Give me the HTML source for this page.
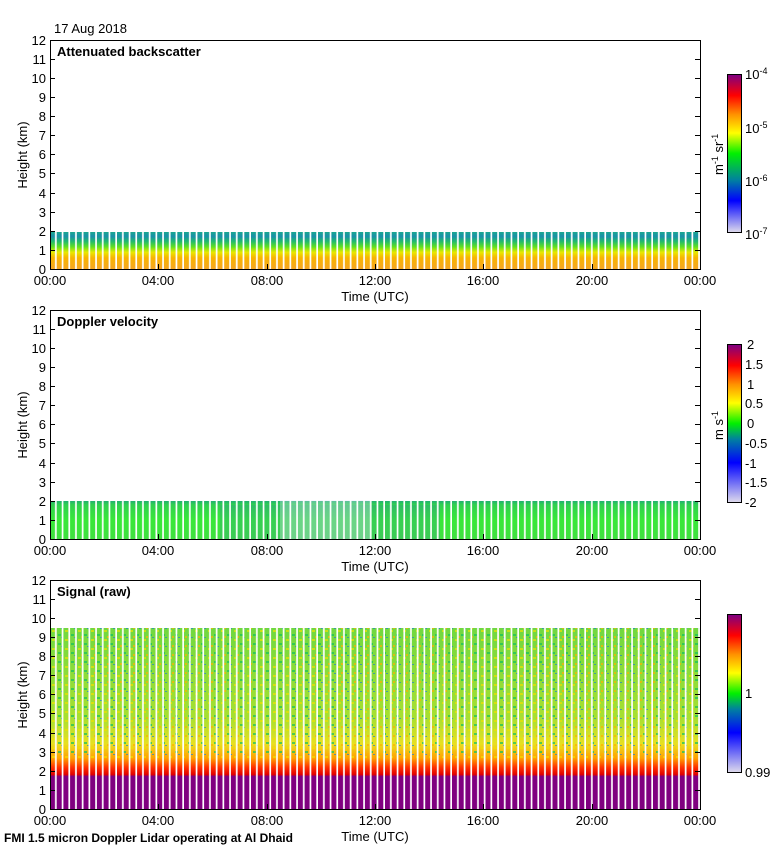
<!DOCTYPE html>
<html><head><meta charset="utf-8"><style>
body{margin:0;background:#fff;width:780px;height:850px;overflow:hidden}
svg text{font-family:"Liberation Sans",sans-serif;font-size:13px;fill:#000}
</style></head><body>
<svg width="780" height="850" xmlns="http://www.w3.org/2000/svg">
<defs>
<pattern id="gap" x="50" y="0" width="6.7" height="10" patternUnits="userSpaceOnUse"><rect x="5" y="0" width="1.7" height="10" fill="#fff"/></pattern>
<pattern id="noise" x="0" y="0" width="13" height="9" patternUnits="userSpaceOnUse"><rect x="0" y="0" width="3" height="2" fill="#f0e000"/><rect x="6" y="4" width="3" height="2" fill="#10c060"/><rect x="9" y="7" width="2" height="1" fill="#2080d0"/><rect x="3" y="6" width="2" height="2" fill="#ffb000"/></pattern>
<linearGradient id="g1" x1="0" y1="1" x2="0" y2="0">
<stop offset="0" stop-color="#f5a623"/><stop offset="0.3" stop-color="#f8b400"/><stop offset="0.45" stop-color="#e8e800"/><stop offset="0.6" stop-color="#60e020"/><stop offset="0.75" stop-color="#20b870"/><stop offset="0.88" stop-color="#1a90a8"/><stop offset="1" stop-color="#18a890"/></linearGradient>
<linearGradient id="g2" x1="0" y1="1" x2="0" y2="0">
<stop offset="0" stop-color="#40e040"/><stop offset="0.5" stop-color="#38e838"/><stop offset="0.9" stop-color="#30d050"/><stop offset="1" stop-color="#20b070"/></linearGradient>
<linearGradient id="g3" x1="0" y1="1" x2="0" y2="0">
<stop offset="0" stop-color="#800080"/><stop offset="0.18" stop-color="#800080"/><stop offset="0.19" stop-color="#e00000"/><stop offset="0.23" stop-color="#ff3000"/><stop offset="0.28" stop-color="#ffa000"/><stop offset="0.36" stop-color="#e8e020"/><stop offset="0.5" stop-color="#a8e030"/><stop offset="1" stop-color="#70d840"/></linearGradient>
<linearGradient id="cb1" x1="0" y1="1" x2="0" y2="0">
<stop offset="0" stop-color="#dcd8ec"/><stop offset="0.2" stop-color="#0000ff"/><stop offset="0.33" stop-color="#0080a0"/><stop offset="0.5" stop-color="#00f000"/><stop offset="0.63" stop-color="#ffff00"/><stop offset="0.75" stop-color="#ff9000"/><stop offset="0.87" stop-color="#ff0000"/><stop offset="1" stop-color="#800080"/></linearGradient>
<linearGradient id="cb3" x1="0" y1="1" x2="0" y2="0">
<stop offset="0" stop-color="#dcd8ec"/><stop offset="0.25" stop-color="#0000ff"/><stop offset="0.4" stop-color="#0080a0"/><stop offset="0.5" stop-color="#00f000"/><stop offset="0.63" stop-color="#ffff00"/><stop offset="0.75" stop-color="#ff9000"/><stop offset="0.87" stop-color="#ff0000"/><stop offset="1" stop-color="#800080"/></linearGradient>
</defs>
<text x="54" y="33">17 Aug 2018</text>

<!-- panel 1 -->
<rect x="50" y="232" width="650" height="37" fill="url(#g1)"/>
<rect x="50" y="228" width="650" height="42" fill="url(#gap)"/>
<!-- panel 2 -->
<rect x="50" y="501" width="650" height="38" fill="url(#g2)"/>
<rect x="220" y="505" width="220" height="34" fill="#3050e0" opacity="0.15"/>
<rect x="280" y="500" width="90" height="39" fill="#e0e0ff" opacity="0.3"/>
<rect x="50" y="498" width="650" height="42" fill="url(#gap)"/>
<!-- panel 3 -->
<rect x="50" y="628" width="650" height="181" fill="url(#g3)"/>
<rect x="50" y="628" width="650" height="130" fill="url(#noise)" opacity="0.7"/>
<rect x="50" y="625" width="650" height="185" fill="url(#gap)"/>

<g fill="none" stroke="#000">
<rect x="50.5" y="40.5" width="650" height="229"/>
<rect x="50.5" y="310.5" width="650" height="229"/>
<rect x="50.5" y="580.5" width="650" height="229"/>
<rect x="727.5" y="74.5" width="14" height="158"/>
<rect x="727.5" y="344.5" width="14" height="158"/>
<rect x="727.5" y="614.5" width="14" height="158"/>
</g>
<rect x="728" y="75" width="13" height="157" fill="url(#cb1)"/>
<rect x="728" y="345" width="13" height="157" fill="url(#cb3)"/>
<rect x="728" y="615" width="13" height="157" fill="url(#cb3)"/>

<g id="yl1" text-anchor="end">
<text x="46" y="45">12</text><text x="46" y="64">11</text><text x="46" y="83">10</text><text x="46" y="102">9</text><text x="46" y="121">8</text><text x="46" y="140">7</text><text x="46" y="159">6</text><text x="46" y="178">5</text><text x="46" y="198">4</text><text x="46" y="217">3</text><text x="46" y="236">2</text><text x="46" y="255">1</text><text x="46" y="274">0</text>
</g>
<use href="#yl1" y="270"/><use href="#yl1" y="540"/>
<g id="xl1" text-anchor="middle">
<text x="50" y="285">00:00</text><text x="158" y="285">04:00</text><text x="267" y="285">08:00</text><text x="375" y="285">12:00</text><text x="483" y="285">16:00</text><text x="592" y="285">20:00</text><text x="700" y="285">00:00</text>
<text x="375" y="301">Time (UTC)</text>
<text transform="translate(27,155) rotate(-90)">Height (km)</text>
</g>
<use href="#xl1" y="270"/><use href="#xl1" y="540"/>
<g id="tk" stroke="#000">
<path d="M50 59.5h5M50 78.5h5M50 97.5h5M50 116.5h5M50 135.5h5M50 154.5h5M50 173.5h5M50 193.5h5M50 212.5h5M50 231.5h5M50 250.5h5M158.5 269v-5M267.5 269v-5M375.5 269v-5M483.5 269v-5M592.5 269v-5M700 59.5h-5M700 78.5h-5M700 97.5h-5M700 116.5h-5M700 135.5h-5M700 154.5h-5M700 173.5h-5M700 193.5h-5M700 212.5h-5M700 231.5h-5M700 250.5h-5"/>
</g>
<use href="#tk" y="270"/><use href="#tk" y="540"/>

<text x="57" y="56" font-weight="bold">Attenuated backscatter</text>
<text x="57" y="326" font-weight="bold">Doppler velocity</text>
<text x="57" y="596" font-weight="bold">Signal (raw)</text>

<text x="745" y="79">10<tspan font-size="9" dy="-5">-4</tspan></text>
<text x="745" y="133">10<tspan font-size="9" dy="-5">-5</tspan></text>
<text x="745" y="186">10<tspan font-size="9" dy="-5">-6</tspan></text>
<text x="745" y="239">10<tspan font-size="9" dy="-5">-7</tspan></text>
<text transform="translate(723,175) rotate(-90)">m<tspan font-size="9" dy="-5">-1</tspan><tspan dy="5"> sr</tspan><tspan font-size="9" dy="-5">-1</tspan></text>

<g>
<text x="747" y="349">2</text><text x="745" y="369">1.5</text><text x="747" y="389">1</text><text x="745" y="408">0.5</text><text x="747" y="428">0</text><text x="745" y="448">-0.5</text><text x="745" y="468">-1</text><text x="745" y="487">-1.5</text><text x="745" y="507">-2</text>
</g>
<text transform="translate(723,440) rotate(-90)">m s<tspan font-size="9" dy="-5">-1</tspan></text>
<text x="745" y="698">1</text>
<text x="745" y="777">0.99</text>

<text x="4" y="842" style="font-size:12px;font-weight:bold">FMI 1.5 micron Doppler Lidar operating at Al Dhaid</text>
</svg>
</body></html>
